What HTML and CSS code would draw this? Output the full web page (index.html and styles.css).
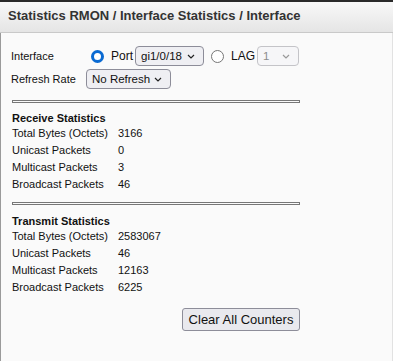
FILE: index.html
```html
<!DOCTYPE html>
<html>
<head>
<meta charset="utf-8">
<link rel="stylesheet" href="styles.css">
</head>
<body>
<div class="topbar"></div>
<div class="header"><h1 class="title">Statistics RMON / Interface Statistics / Interface</h1></div>
<div class="content">
  <div class="form">
    <div class="frow">
      <span class="flabel">Interface</span>
      <span class="radio checked"></span><span class="rlabel">Port</span>
      <span class="sel sel-port">gi1/0/18<svg class="chev" viewBox="0 0 8 5" width="8" height="5"><path d="M1 1l3 3 3-3" fill="none" stroke="#222" stroke-width="1.2"/></svg></span>
      <span class="radio"></span><span class="rlabel">LAG</span>
      <span class="sel sel-lag disabled">1<svg class="chev" viewBox="0 0 8 5" width="8" height="5"><path d="M1 1l3 3 3-3" fill="none" stroke="#999" stroke-width="1.2"/></svg></span>
    </div>
    <div class="frow">
      <span class="flabel">Refresh Rate</span>
      <span class="sel sel-rate">No Refresh<svg class="chev" viewBox="0 0 8 5" width="8" height="5"><path d="M1 1l3 3 3-3" fill="none" stroke="#222" stroke-width="1.2"/></svg></span>
    </div>
  </div>
  <div class="sep"></div>
  <h2 class="sect">Receive Statistics</h2>
  <div class="stats">
    <span class="sl">Total Bytes (Octets)</span><span class="sv">3166</span>
    <span class="sl">Unicast Packets</span><span class="sv">0</span>
    <span class="sl">Multicast Packets</span><span class="sv">3</span>
    <span class="sl">Broadcast Packets</span><span class="sv">46</span>
  </div>
  <div class="sep sep2"></div>
  <h2 class="sect">Transmit Statistics</h2>
  <div class="stats">
    <span class="sl">Total Bytes (Octets)</span><span class="sv">2583067</span>
    <span class="sl">Unicast Packets</span><span class="sv">46</span>
    <span class="sl">Multicast Packets</span><span class="sv">12163</span>
    <span class="sl">Broadcast Packets</span><span class="sv">6225</span>
  </div>
  <div class="actions"><button class="btn">Clear All Counters</button></div>
</div>
</body>
</html>
```
FILE: styles.css
```css
html, body { margin: 0; padding: 0; }
body {
  background: #fafafa;
  font-family: "Liberation Sans", Arial, sans-serif;
  color: #111;
  height: 361px;
  display: flex;
  flex-direction: column;
  overflow: hidden;
}
.topbar { height: 2px; background: #2a2a2a; flex: none; }
.header {
  flex: none;
  height: 30px;
  background: linear-gradient(#f8f8f8, #e5e5e5);
  border-bottom: 1px solid #c9c9c9;
}
.title {
  margin: 0;
  padding: 6px 0 0 8px;
  font-size: 13px;
  font-weight: bold;
  color: #333;
  line-height: 15px;
}
.content {
  flex: 1;
  border-left: 1px solid #9a9a9a;
  border-right: 1px solid #e2e2e2;
  padding: 13px 0 0 10px;
}
.form { display: flex; flex-direction: column; gap: 3px; }
.frow { display: flex; align-items: center; height: 20px; font-size: 11px; }
.flabel { width: 75px; flex: none; }
.radio {
  width: 13px; height: 13px; box-sizing: border-box;
  border-radius: 50%;
  border: 1px solid #767676;
  background: #fff;
  margin: 0 7px 0 5px;
  flex: none;
}
.radio.checked { border: 3px solid #0a6ad2; }
.rlabel { margin-right: 2px; font-size: 12px; }
.sel {
  display: inline-flex; align-items: center; justify-content: space-between;
  box-sizing: border-box;
  height: 20px;
  border: 1px solid #8d8d99;
  border-radius: 4px;
  background: #efeff3;
  font-size: 11.5px;
  white-space: nowrap;
  padding: 0 8px 0 5px;
  flex: none;
}
.chev { flex: none; }
.sel-port { width: 69px; margin-right: 2px; }
.sel-lag { width: 42px; }
.sel-rate { width: 85px; }
.sel.disabled { border-color: #c4c4c8; color: #8c8c8c; background: #f6f6f8; }
.sep {
  margin: 11px 0 0 1px;
  width: 286px;
  height: 1px;
  border: 1px solid #777;
  background: #fafafa;
}
.sep2 { margin-top: 10px; }
.sect {
  margin: 9px 0 0 1px;
  font-size: 11px;
  font-weight: bold;
  line-height: 12px;
}
.sep2 + .sect { margin-top: 10px; }
.stats {
  display: grid;
  grid-template-columns: 106px auto;
  grid-auto-rows: 17px;
  align-items: center;
  font-size: 11px;
  margin-left: 1px;
}
.actions { display: flex; justify-content: flex-end; width: 289px; margin-top: 13px; }
.btn {
  font-family: "Liberation Sans", Arial, sans-serif;
  font-size: 13px;
  height: 23px;
  width: 118px;
  padding: 0;
  border: 1px solid #8d8d99;
  border-radius: 3px;
  background: #e9e9ee;
  color: #111;
}
```
